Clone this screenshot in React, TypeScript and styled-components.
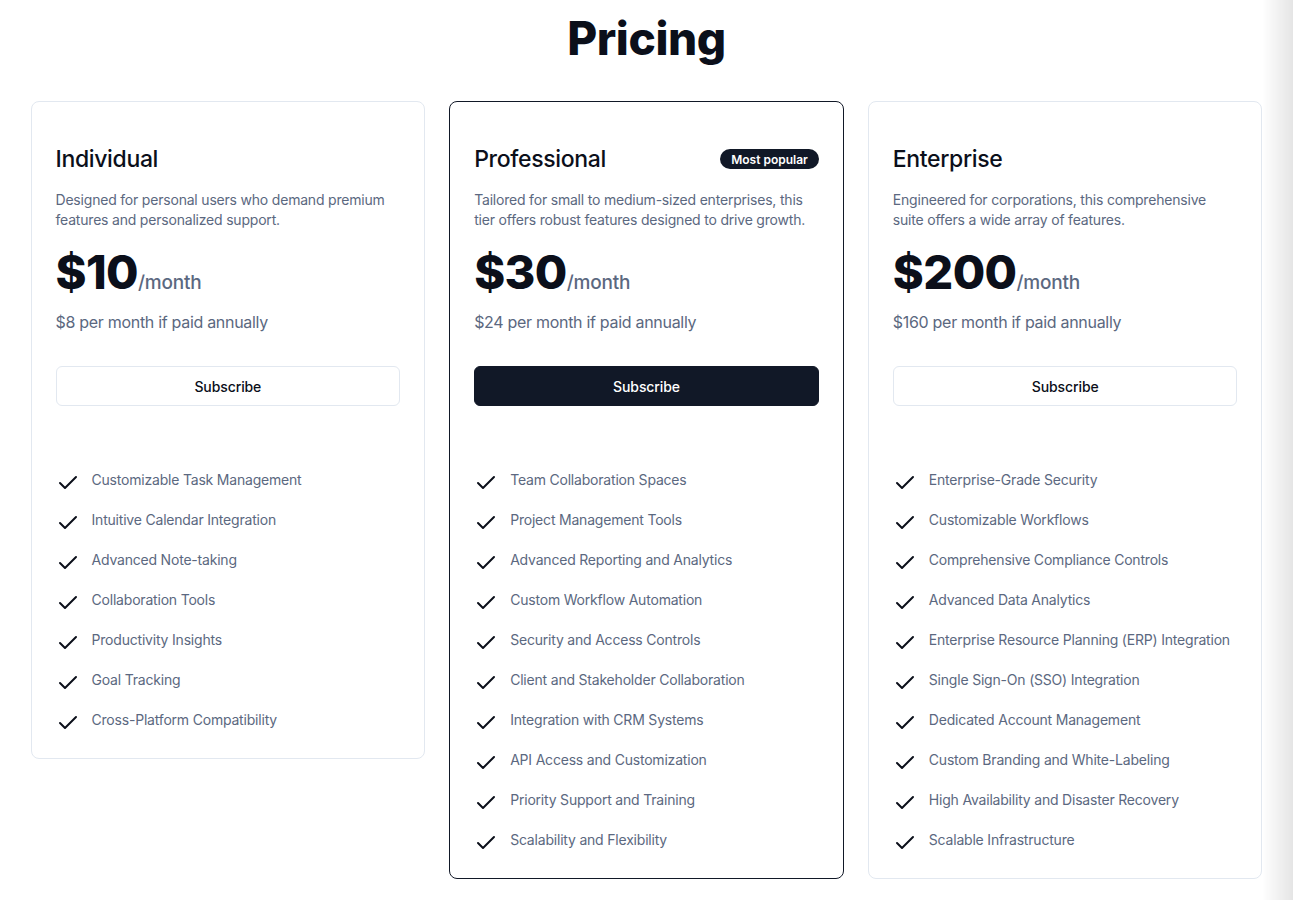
import React from "react";
import styled, { createGlobalStyle } from "styled-components";
import { Check } from "lucide-react";

type Plan = {
  name: string;
  description: string;
  price: string;
  annual: string;
  popular?: boolean;
  features: string[];
};

const plans: Plan[] = [
  {
    name: "Individual",
    description:
      "Designed for personal users who demand premium features and personalized support.",
    price: "$10",
    annual: "$8 per month if paid annually",
    features: [
      "Customizable Task Management",
      "Intuitive Calendar Integration",
      "Advanced Note-taking",
      "Collaboration Tools",
      "Productivity Insights",
      "Goal Tracking",
      "Cross-Platform Compatibility",
    ],
  },
  {
    name: "Professional",
    description:
      "Tailored for small to medium-sized enterprises, this tier offers robust features designed to drive growth.",
    price: "$30",
    annual: "$24 per month if paid annually",
    popular: true,
    features: [
      "Team Collaboration Spaces",
      "Project Management Tools",
      "Advanced Reporting and Analytics",
      "Custom Workflow Automation",
      "Security and Access Controls",
      "Client and Stakeholder Collaboration",
      "Integration with CRM Systems",
      "API Access and Customization",
      "Priority Support and Training",
      "Scalability and Flexibility",
    ],
  },
  {
    name: "Enterprise",
    description:
      "Engineered for corporations, this comprehensive suite offers a wide array of features.",
    price: "$200",
    annual: "$160 per month if paid annually",
    features: [
      "Enterprise-Grade Security",
      "Customizable Workflows",
      "Comprehensive Compliance Controls",
      "Advanced Data Analytics",
      "Enterprise Resource Planning (ERP) Integration",
      "Single Sign-On (SSO) Integration",
      "Dedicated Account Management",
      "Custom Branding and White-Labeling",
      "High Availability and Disaster Recovery",
      "Scalable Infrastructure",
    ],
  },
];

export default function App() {
  return (
    <>
      <GlobalStyle />
      <Page>
        <Title>Pricing</Title>
        <Grid>
          {plans.map((plan) => (
            <Card key={plan.name} $highlight={plan.popular}>
              <CardHeader>
                <PlanName>{plan.name}</PlanName>
                {plan.popular && <Badge>Most popular</Badge>}
              </CardHeader>
              <Description>{plan.description}</Description>
              <PriceRow>
                <Price>{plan.price}</Price>
                <Period>/month</Period>
              </PriceRow>
              <Annual>{plan.annual}</Annual>
              <SubscribeButton $primary={plan.popular}>Subscribe</SubscribeButton>
              <FeatureList>
                {plan.features.map((feature) => (
                  <Feature key={feature}>
                    <CheckIcon size={24} strokeWidth={2} />
                    <FeatureText>{feature}</FeatureText>
                  </Feature>
                ))}
              </FeatureList>
            </Card>
          ))}
        </Grid>
      </Page>
      <EdgeShade />
    </>
  );
}

const GlobalStyle = createGlobalStyle`
  * {
    box-sizing: border-box;
  }
  body {
    margin: 0;
    background: #ffffff;
    font-family: Inter, "Noto Sans", sans-serif;
    color: #0f172a;
  }
`;

const Page = styled.main`
  display: flex;
  flex-direction: column;
  align-items: center;
  padding-top: 11px;
`;

const Title = styled.h1`
  margin: 0;
  font-size: 46px;
  line-height: 54px;
  font-weight: 800;
  color: #0b0f1a;
  letter-spacing: -0.4px;
`;

const Grid = styled.div`
  width: 1232px;
  margin-top: 36px;
  display: grid;
  grid-template-columns: repeat(3, 1fr);
  gap: 24px;
  align-items: start;
`;

const Card = styled.section<{ $highlight?: boolean }>`
  display: flex;
  flex-direction: column;
  padding: 41px 24px 23px;
  border: 1px solid ${(p) => (p.$highlight ? "#111827" : "#e2e8f0")};
  border-radius: 8px;
  background: #ffffff;
`;

const CardHeader = styled.div`
  display: flex;
  align-items: center;
  justify-content: space-between;
`;

const PlanName = styled.h2`
  margin: 0;
  font-size: 23px;
  line-height: 32px;
  font-weight: 500;
  letter-spacing: -0.35px;
  color: #0b0f1a;
`;

const Badge = styled.span`
  display: inline-flex;
  align-items: center;
  height: 20px;
  padding: 0 11px;
  border-radius: 999px;
  background: #111827;
  color: #ffffff;
  font-size: 12px;
  font-weight: 600;
`;

const Description = styled.p`
  margin: 15px 0 0;
  font-size: 14px;
  line-height: 20px;
  letter-spacing: -0.2px;
  color: #5b6880;
`;

const PriceRow = styled.div`
  display: flex;
  align-items: baseline;
  margin-top: 19px;
`;

const Price = styled.span`
  font-size: 47px;
  line-height: 46px;
  font-weight: 800;
  letter-spacing: -0.6px;
  color: #0b0f1a;
`;

const Period = styled.span`
  font-size: 19px;
  font-weight: 500;
  letter-spacing: -0.2px;
  color: #5b6880;
`;

const Annual = styled.p`
  margin: 15px 0 0;
  font-size: 16px;
  line-height: 24px;
  letter-spacing: -0.3px;
  color: #5b6880;
`;

const SubscribeButton = styled.button<{ $primary?: boolean }>`
  margin-top: 32px;
  height: 40px;
  width: 100%;
  border-radius: 6px;
  border: 1px solid ${(p) => (p.$primary ? "#111827" : "#e2e8f0")};
  background: ${(p) => (p.$primary ? "#111827" : "#ffffff")};
  color: ${(p) => (p.$primary ? "#ffffff" : "#0b0f1a")};
  font-family: Inter, "Noto Sans", sans-serif;
  font-size: 14px;
  font-weight: 500;
  letter-spacing: -0.1px;
  cursor: pointer;
`;

const FeatureList = styled.ul`
  list-style: none;
  margin: 64px 0 0;
  padding: 0;
  display: flex;
  flex-direction: column;
  gap: 15px;
`;

const Feature = styled.li`
  display: flex;
  align-items: flex-start;
  gap: 12px;
`;

const CheckIcon = styled(Check)`
  flex-shrink: 0;
  margin-top: 1px;
  color: #0b0f1a;
`;

const FeatureText = styled.span`
  font-size: 14px;
  line-height: 20px;
  letter-spacing: -0.2px;
  white-space: nowrap;
  color: #5b6880;
`;

const EdgeShade = styled.div`
  position: fixed;
  top: 0;
  right: 0;
  width: 31px;
  height: 100vh;
  pointer-events: none;
  background: linear-gradient(to right, rgba(0, 0, 0, 0), rgba(0, 0, 0, 0.1));
`;
